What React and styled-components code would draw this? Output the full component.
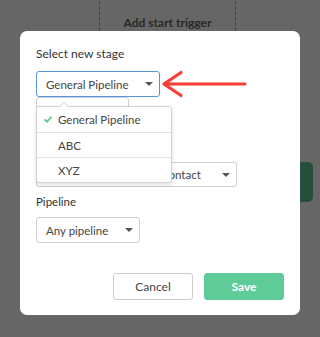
import React from 'react'
import styled, { createGlobalStyle } from 'styled-components'

const GlobalStyle = createGlobalStyle`
  html, body {
    margin: 0;
    padding: 0;
    background: #ffffff;
  }
  body {
    font-family: Lato, "Open Sans", sans-serif;
    color: #333;
  }
  * {
    box-sizing: border-box;
  }
`

const Page = styled.div`
  position: relative;
  width: 320px;
  height: 337px;
  overflow: hidden;
  background: #ffffff;
`

const Canvas = styled.div`
  display: flex;
  flex-direction: column;
  align-items: center;
  height: 100%;
`

const TriggerBox = styled.div`
  width: 137px;
  height: 60px;
  margin-top: -14px;
  margin-left: 15px;
  border: 1px dashed #a0a0a0;
  display: flex;
  align-items: center;
  justify-content: center;
  padding-top: 12px;
  font-size: 12px;
  font-weight: 700;
  color: #666;
`

const GreenNode = styled.div`
  align-self: flex-end;
  width: 60px;
  height: 40px;
  margin-top: 116px;
  margin-right: 7px;
  border-radius: 5px;
  background: #62c997;
`

const Overlay = styled.div`
  position: absolute;
  inset: 0;
  background: rgba(0, 0, 0, 0.6);
  padding: 31px 20px 0;
`

const Modal = styled.div`
  position: relative;
  width: 280px;
  height: 284px;
  background: #fff;
  border-radius: 7px;
  padding: 15px 16px 15px;
  display: flex;
  flex-direction: column;
`

const Label = styled.div`
  font-size: ${(p) => p.$size || 12}px;
  line-height: 16px;
  color: #333;
  margin-bottom: ${(p) => p.$gap || 9}px;
`

const SelectWrap = styled.div`
  position: relative;
  width: ${(p) => p.$width}px;
`

const SelectBox = styled.div`
  width: ${(p) => p.$width}px;
  height: ${(p) => p.$height || 26}px;
  border: 1px solid ${(p) => (p.$active ? '#5a92da' : '#cfcfcf')};
  border-radius: 3px;
  background: #fff;
  display: flex;
  align-items: center;
  justify-content: space-between;
  padding: 0 6px 0 9px;
  font-size: 11.5px;
  color: #444;
  white-space: nowrap;
  overflow: hidden;
`

const Caret = styled.span`
  width: 0;
  height: 0;
  margin-left: auto;
  border-left: 4px solid transparent;
  border-right: 4px solid transparent;
  border-top: 4px solid #555;
  flex: none;
`

const Menu = styled.ul`
  position: absolute;
  top: 35px;
  left: 0;
  width: 136px;
  margin: 0;
  padding: 0;
  list-style: none;
  background: #fff;
  border: 1px solid #d2d2d2;
  border-radius: 3px;
  box-shadow: 0 2px 4px rgba(0, 0, 0, 0.12);
  z-index: 2;

  &::before,
  &::after {
    content: '';
    position: absolute;
    left: 22px;
    width: 0;
    height: 0;
    border-left: 5px solid transparent;
    border-right: 5px solid transparent;
  }
  &::before {
    top: -5px;
    border-bottom: 5px solid #d2d2d2;
  }
  &::after {
    top: -4px;
    border-bottom: 5px solid #fff;
  }
`

const MenuItem = styled.li`
  position: relative;
  height: 25px;
  display: flex;
  align-items: center;
  padding-left: 21px;
  font-size: 11.5px;
  color: #444;
  border-top: ${(p) => (p.$first ? 'none' : '1px solid #e2e2e2')};

  svg {
    position: absolute;
    left: 7px;
    top: 9px;
  }
`

const Spacer = styled.div`
  height: ${(p) => p.$h}px;
  flex: none;
`

const Footer = styled.div`
  margin-top: auto;
  display: flex;
  justify-content: flex-end;
  gap: 11px;
`

const Button = styled.button`
  width: 80px;
  height: 27px;
  border-radius: 3px;
  font-family: Lato, "Open Sans", sans-serif;
  font-size: 12px;
  cursor: pointer;
  border: 1px solid ${(p) => (p.$primary ? '#5fcb98' : '#cdcdcd')};
  background: ${(p) => (p.$primary ? '#5fcb98' : '#fff')};
  color: ${(p) => (p.$primary ? '#fff' : '#444')};
  font-weight: ${(p) => (p.$primary ? 700 : 400)};
`

const Arrow = styled.svg`
  position: absolute;
  left: 161px;
  top: 70px;
`

const Check = () => (
  <svg width="8" height="7" viewBox="0 0 8 7">
    <path d="M1 3.8 L3 5.8 L7 1.2" fill="none" stroke="#5fcb98" strokeWidth="1.8" strokeLinecap="round" strokeLinejoin="round" />
  </svg>
)

export default function App() {
  return (
    <>
      <GlobalStyle />
      <Page>
        <Canvas>
          <TriggerBox>Add start trigger</TriggerBox>
          <GreenNode />
        </Canvas>
        <Overlay>
          <Modal>
            <Label>Select new stage</Label>
            <SelectWrap $width={124}>
              <SelectBox $width={124} $active>
                General Pipeline
                <Caret />
              </SelectBox>
              <SelectBox $width={93} $height={24} />
              <Menu>
                <MenuItem $first>
                  <Check />
                  General Pipeline
                </MenuItem>
                <MenuItem>ABC</MenuItem>
                <MenuItem>XYZ</MenuItem>
              </Menu>
            </SelectWrap>
            <Spacer $h={41} />
            <SelectBox $width={201} $height={25}>
              Once stage changes to contact
              <Caret />
            </SelectBox>
            <Spacer $h={7} />
            <Label $size={11.5} $gap={7}>Pipeline</Label>
            <SelectBox $width={104}>
              Any pipeline
              <Caret />
            </SelectBox>
            <Footer>
              <Button>Cancel</Button>
              <Button $primary>Save</Button>
            </Footer>
          </Modal>
        </Overlay>
        <Arrow width="110" height="70" viewBox="0 0 110 70">
          <path d="M3 14 L84 14 M3 14 L20 2.5 M3 14 L20 25.5" fill="none" stroke="#f53d36" strokeWidth="3.2" strokeLinecap="round" strokeLinejoin="round" />
        </Arrow>
      </Page>
    </>
  )
}
